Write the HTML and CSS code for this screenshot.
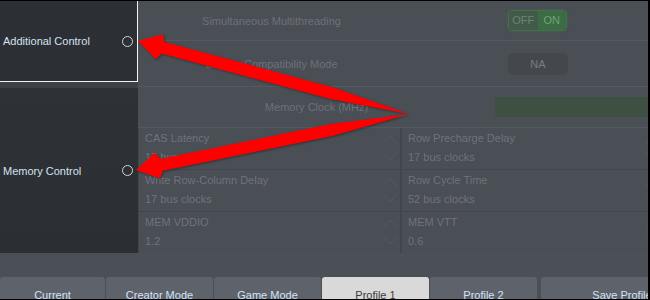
FILE: index.html
```html
<!DOCTYPE html>
<html lang="en">

<head>
    <meta charset="UTF-8">
    <meta name="viewport" content="width=device-width, initial-scale=1.0">
    <title>Memory Control</title>
    <link rel="stylesheet" href="styles.css">
</head>

<body>
    <div class="app">
        <div class="main">
            <aside class="side">
                <div class="side-box">
                    <span>Additional Control</span>
                    <span class="radio"></span>
                </div>
                <div class="side-gap"></div>
                <div class="side-panel">
                    <span>Memory Control</span>
                    <span class="radio"></span>
                </div>
            </aside>

            <div class="content">
                <div class="row row-smt">
                    <div class="row-label">Simultaneous Multithreading</div>
                    <div class="row-control">
                        <div class="toggle">
                            <span class="off">OFF</span>
                            <span class="on">ON</span>
                        </div>
                    </div>
                </div>
                <div class="row row-legacy">
                    <div class="row-label">Legacy Compatibility Mode</div>
                    <div class="row-control">
                        <div class="na">NA</div>
                    </div>
                </div>
                <div class="row row-clock">
                    <div class="row-label wide">Memory Clock (MHz)</div>
                    <div class="clock-bar"></div>
                </div>

                <div class="grid">
                    <div class="cell">
                        <div class="cell-text">
                            <div class="cell-label">CAS Latency</div>
                            <div class="cell-value">17 bus clocks</div>
                        </div>
                        <div class="spin">
                            <svg width="14" height="36" viewBox="0 0 14 36"><polyline points="0,15 7,7 14,15" /><polyline points="0,23 7,31 14,23" /></svg>
                        </div>
                    </div>
                    <div class="cell">
                        <div class="cell-text">
                            <div class="cell-label">Row Precharge Delay</div>
                            <div class="cell-value">17 bus clocks</div>
                        </div>
                        <div class="spin">
                            <svg width="14" height="36" viewBox="0 0 14 36"><polyline points="0,15 7,7 14,15" /><polyline points="0,23 7,31 14,23" /></svg>
                        </div>
                    </div>
                    <div class="cell">
                        <div class="cell-text">
                            <div class="cell-label">Write Row-Column Delay</div>
                            <div class="cell-value">17 bus clocks</div>
                        </div>
                        <div class="spin">
                            <svg width="14" height="36" viewBox="0 0 14 36"><polyline points="0,15 7,7 14,15" /><polyline points="0,23 7,31 14,23" /></svg>
                        </div>
                    </div>
                    <div class="cell">
                        <div class="cell-text">
                            <div class="cell-label">Row Cycle Time</div>
                            <div class="cell-value">52 bus clocks</div>
                        </div>
                        <div class="spin">
                            <svg width="14" height="36" viewBox="0 0 14 36"><polyline points="0,15 7,7 14,15" /><polyline points="0,23 7,31 14,23" /></svg>
                        </div>
                    </div>
                    <div class="cell">
                        <div class="cell-text">
                            <div class="cell-label">MEM VDDIO</div>
                            <div class="cell-value">1.2</div>
                        </div>
                        <div class="spin">
                            <svg width="14" height="36" viewBox="0 0 14 36"><polyline points="0,15 7,7 14,15" /><polyline points="0,23 7,31 14,23" /></svg>
                        </div>
                    </div>
                    <div class="cell">
                        <div class="cell-text">
                            <div class="cell-label">MEM VTT</div>
                            <div class="cell-value">0.6</div>
                        </div>
                        <div class="spin">
                            <svg width="14" height="36" viewBox="0 0 14 36"><polyline points="0,15 7,7 14,15" /><polyline points="0,23 7,31 14,23" /></svg>
                        </div>
                    </div>
                </div>
            </div>
        </div>

        <div class="strip"></div>

        <nav class="tabs">
            <div class="tab">Current</div>
            <div class="tab">Creator Mode</div>
            <div class="tab">Game Mode</div>
            <div class="tab active">Profile 1</div>
            <div class="tab">Profile 2</div>
            <div class="tab save">Save Profile</div>
        </nav>

        <!-- red callout arrows drawn over the screenshot -->
        <svg class="arrows" width="650" height="300" viewBox="0 0 650 300">
            <polygon points="138,41 162.6,34.2 164.7,42 332.7,87.2 409,114 329.5,98.8 161.5,53.5 155.9,59.3" />
            <polygon points="136,170 154.9,152.8 160.3,158.9 330.7,123.9 409,114 333.1,135.7 162.7,170.7 160.2,178.3" />
        </svg>
    </div>
</body>

</html>
```

FILE: styles.css
```css
body {
    margin: 0;
    padding: 0;
    background-color: #000;
    font-family: "Liberation Sans", Arial, sans-serif;
    font-size: 11px;
}

.app {
    position: relative;
    width: 650px;
    height: 300px;
    box-sizing: border-box;
    border-top: 1px solid #000;
    border-right: 2px solid #000;
    border-bottom: 1px solid #000;
    background-color: #4b4f56;
    overflow: hidden;
    display: flex;
    flex-direction: column;
}

.main {
    display: flex;
    height: 252px;
    flex-shrink: 0;
}

/* left column */

.side {
    width: 138px;
    flex-shrink: 0;
    display: flex;
    flex-direction: column;
}

.side-box,
.side-panel {
    display: flex;
    align-items: center;
    justify-content: space-between;
    padding: 0 5px 0 3px;
    color: #d5e2f2;
    background-color: #2c2f33;
}

.side-box {
    height: 81px;
    box-sizing: border-box;
    border-right: 1px solid #f4f4f4;
    border-bottom: 1px solid #f4f4f4;
    padding-right: 4px;
}

.side-gap {
    height: 6px;
    background-color: #3d4147;
}

.side-panel {
    flex: 1;
    padding-right: 5px;
    background: linear-gradient(to bottom, #2e3135, #2b2e32);
}

.radio {
    width: 9px;
    height: 9px;
    border: 1.5px solid #d4d4d4;
    border-radius: 50%;
}

/* settings */

.content {
    flex: 1;
    display: flex;
    flex-direction: column;
    background-color: #4a4e55;
    color: #6d7178;
}

.row {
    display: flex;
    align-items: center;
    box-sizing: border-box;
    border-bottom: 1px solid #54585f;
}

.row-smt {
    height: 40px;
}

.row-legacy {
    height: 46px;
}

.row-clock {
    height: 41px;
}

.row-label {
    width: 267px;
    text-align: center;
}

.row-label.wide {
    width: 357px;
}

.row-control {
    padding-left: 103px;
}

.toggle {
    display: flex;
    width: 59px;
    height: 21px;
    box-sizing: border-box;
    border: 1px solid #43714b;
    border-radius: 4px;
    overflow: hidden;
    box-shadow: 0 0 3px #3f6a47;
    line-height: 19px;
    text-align: center;
}

.toggle span {
    flex: 1;
}

.toggle .off {
    background-color: #435a4a;
    color: #68866d;
}

.toggle .on {
    background-color: #3b6c44;
    color: #74a379;
}

.na {
    width: 60px;
    height: 22px;
    line-height: 22px;
    text-align: center;
    border-radius: 5px;
    background-color: #44474c;
    color: #797d83;
}

.clock-bar {
    width: 160px;
    height: 20px;
    background-color: #3d5041;
}

.grid {
    flex: 1;
    display: grid;
    grid-template-columns: 261px 261px;
    grid-template-rows: repeat(3, 41px);
    column-gap: 2px;
    row-gap: 1px;
    padding-left: 1px;
    background-color: #42464c;
}

.cell {
    display: flex;
    justify-content: space-between;
    padding: 1px 3px 0 6px;
    background-color: #4a4e55;
    color: #6f737a;
    line-height: 19px;
}

.spin svg {
    display: block;
}

.spin polyline {
    fill: none;
    stroke: #55595f;
    stroke-width: 1;
}

/* bottom */

.strip {
    height: 24px;
    flex-shrink: 0;
    background-color: #4b4f56;
}

.tabs {
    display: flex;
    gap: 1px;
    height: 22px;
    flex-shrink: 0;
    background-color: #4b4f56;
}

.tab {
    width: 107px;
    flex-shrink: 0;
    padding-top: 12px;
    box-sizing: border-box;
    text-align: center;
    line-height: 13px;
    border-radius: 3px 3px 0 0;
    background-color: #5e626a;
    color: #d3e3f6;
}

.tab:first-child {
    width: 105px;
}

.tab.active {
    background-color: #d9d9d9;
    color: #3a3a3a;
}

.tab.save {
    width: 162px;
    margin-left: 3px;
}

.arrows {
    position: absolute;
    top: -1px;
    left: 0;
    filter: drop-shadow(1px 1px 1px rgba(0, 0, 0, 0.35));
}

.arrows polygon {
    fill: #ff0000;
}
```
